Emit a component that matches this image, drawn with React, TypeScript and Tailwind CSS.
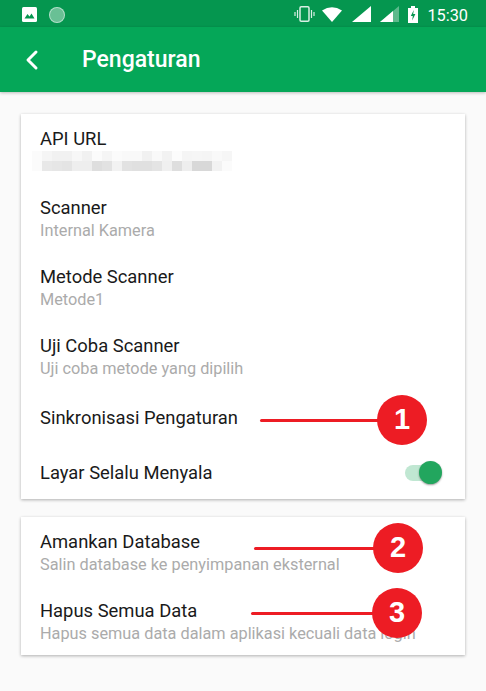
import { ChevronLeft } from "lucide-react"

const mosaicTop = ["#fbfbfb", "#f5f5f5", "#f1f1f1", "#f1f1f1", "#f7f7f7", "#f1f1f1", "#fbfbfb", "#f5f5f5", "#fbfbfb", "#f9f9f9", "#f9f9f9", "#f1f1f1", "#f9f9f9", "#f2f2f2", "#fcfcfc", "#f5f5f5", "#f6f6f6", "#f5f5f5", "#f9f9f9", "#f6f6f6"]
const mosaicBottom = ["#fbfbfb", "#e8e8e8", "#e6e6e6", "#e4e4e4", "#eeeeee", "#eeeeee", "#dedede", "#e2e2e2", "#f2f2f2", "#e2e2e2", "#e0e0e0", "#e0e0e0", "#e4e4e4", "#f0f0f0", "#dedede", "#eeeeee", "#d8d8d8", "#d8d8d8", "#f2f2f2", "#fbfbfb"]

function StatusBar() {
  return (
    <div className="flex h-[27px] items-center justify-between bg-[#05964f] pl-[22px] pr-[18px] pt-[2px] text-white">
      <div className="flex items-center gap-[12px]">
        <svg width="15" height="15" viewBox="0 0 15 15">
          <rect width="15" height="15" rx="1.5" fill="#fff" />
          <path d="M2.5 11.5 L5.5 7 L7.5 9.5 L9.5 6.5 L12.5 11.5 Z" fill="#05964f" />
        </svg>
        <div className="h-[16px] w-[16px] rounded-full border border-white/50 bg-white/40" />
      </div>
      <div className="flex items-center">
        <svg width="21" height="16" viewBox="0 0 21 16" fill="none" stroke="#fff" strokeOpacity="0.85">
          <rect x="6" y="0.8" width="9" height="14.4" rx="1.2" strokeWidth="1.5" />
          <path d="M3.5 4v8M1 6v4M17.5 4v8M20 6v4" strokeWidth="1.2" />
        </svg>
        <svg className="ml-[7px]" width="20" height="15" viewBox="0 0 20 15">
          <path d="M0 3.5 Q10 -3 20 3.5 L10 15 Z" fill="#fff" />
        </svg>
        <svg className="ml-[10px]" width="19" height="16" viewBox="0 0 19 16">
          <path d="M0 16 L19 0 V16 Z" fill="#fff" />
        </svg>
        <svg className="ml-[9px]" width="19" height="16" viewBox="0 0 19 16">
          <path d="M0 16 L19 0 V16 Z" fill="#fff" fillOpacity="0.35" />
          <path d="M0 16 L13 5 V16 Z" fill="#fff" />
        </svg>
        <svg className="ml-[9px]" width="10" height="17" viewBox="0 0 10 17">
          <path d="M3 0h4v2h3v15H0V2h3z" fill="#fff" />
          <path d="M5.8 4 L2.8 10 H4.8 L4.2 14.5 L7.4 8 H5.2 Z" fill="#05964f" />
        </svg>
        <span className="ml-[9px] mt-[3px] text-[16.3px] leading-none">15:30</span>
      </div>
    </div>
  )
}

function Toolbar() {
  return (
    <div className="flex h-[65px] items-center bg-[#05a758] shadow-[0_1px_3px_rgba(0,0,0,0.25)]">
      <ChevronLeft className="ml-[16px] h-[32px] w-[32px] text-white" strokeWidth={2.25} />
      <h1 className="ml-[34px] mt-[2px] text-[23px] font-medium text-white">Pengaturan</h1>
    </div>
  )
}

function Row({ title, subtitle }: { title: string; subtitle: string }) {
  return (
    <div className="h-[69px] px-[19px] pt-[13px]">
      <div className="text-[18.4px] leading-[23px] text-[#1a1a1a]">{title}</div>
      <div className="text-[16.3px] leading-[23px] text-[#ababab]">{subtitle}</div>
    </div>
  )
}

function Mosaic() {
  return (
    <div className="mt-[1px] -ml-[8px] flex flex-col">
      {[mosaicTop, mosaicBottom].map((cells, i) => (
        <div key={i} className="flex">
          {cells.map((color, j) => (
            <div key={j} className="h-[10px] w-[10px]" style={{ backgroundColor: color }} />
          ))}
        </div>
      ))}
    </div>
  )
}

function Marker({ n, lineLeft, lineTop, circleLeft, circleTop }: { n: number; lineLeft: number; lineTop: number; circleLeft: number; circleTop: number }) {
  return (
    <>
      <div
        className="absolute h-[3px] rounded-full bg-[#ed1c24]"
        style={{ left: lineLeft, top: lineTop, width: circleLeft - lineLeft + 10 }}
      />
      <div
        className="absolute flex h-[50px] w-[50px] items-center justify-center rounded-full bg-[#ed1c24] font-['Liberation_Sans',sans-serif] text-[29px] font-bold text-white"
        style={{ left: circleLeft, top: circleTop }}
      >
        {n}
      </div>
    </>
  )
}

export default function App() {
  return (
    <div className="relative h-[691px] w-[486px] overflow-hidden bg-[#fafafa] font-['Roboto',sans-serif]">
      <StatusBar />
      <Toolbar />

      <div className="mx-[21px] mt-[22px] h-[385px] w-[444px] bg-white shadow-[0_1px_3px_rgba(0,0,0,0.3)]">
        <div className="h-[69px] px-[19px] pt-[13px]">
          <div className="text-[18.4px] leading-[23px] text-[#1a1a1a]">API URL</div>
          <Mosaic />
        </div>
        <Row title="Scanner" subtitle="Internal Kamera" />
        <Row title="Metode Scanner" subtitle="Metode1" />
        <Row title="Uji Coba Scanner" subtitle="Uji coba metode yang dipilih" />
        <div className="flex h-[56px] items-center px-[19px] text-[18.4px] text-[#1a1a1a]">Sinkronisasi Pengaturan</div>
        <div className="flex h-[53px] items-center justify-between pl-[19px] pr-[26px] text-[18.4px] text-[#1a1a1a]">
          <span>Layar Selalu Menyala</span>
          <div className="relative h-[16px] w-[34px] rounded-full bg-[#c0e7d2]">
            <div className="absolute -top-[4px] left-[14px] h-[23px] w-[23px] rounded-full bg-[#22a65e] shadow-[0_1px_2px_rgba(0,0,0,0.4)]" />
          </div>
        </div>
      </div>

      <div className="mx-[21px] mt-[18px] h-[138px] w-[444px] bg-white shadow-[0_1px_3px_rgba(0,0,0,0.3)]">
        <Row title="Amankan Database" subtitle="Salin database ke penyimpanan eksternal" />
        <Row title="Hapus Semua Data" subtitle="Hapus semua data dalam aplikasi kecuali data login" />
      </div>

      <Marker n={1} lineLeft={260} lineTop={419} circleLeft={377} circleTop={395} />
      <Marker n={2} lineLeft={254} lineTop={547} circleLeft={373} circleTop={523} />
      <Marker n={3} lineLeft={251} lineTop={612} circleLeft={372} circleTop={588} />
    </div>
  )
}
